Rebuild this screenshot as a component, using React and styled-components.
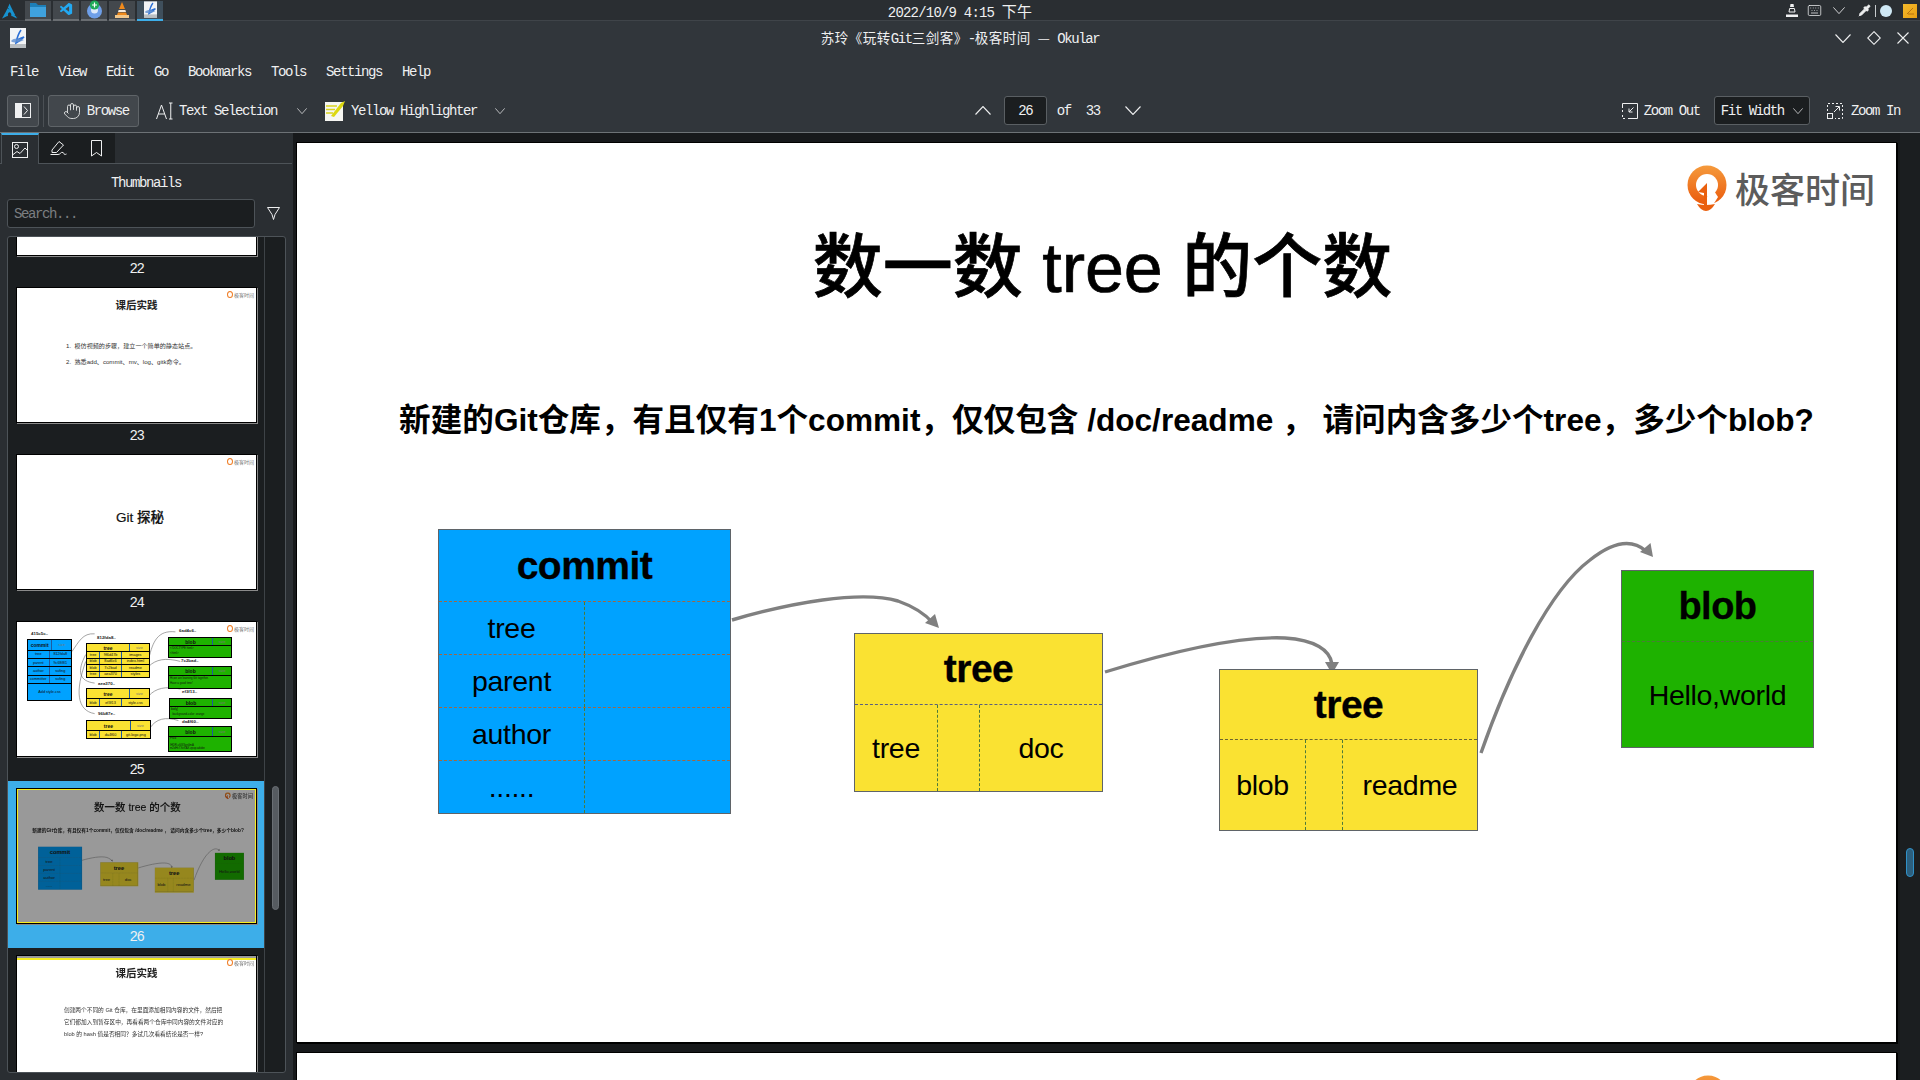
import styled, { createGlobalStyle, css } from "styled-components";
import { Hand, Keyboard, Pipette } from "lucide-react";
import { SiArchlinux } from "react-icons/si";
import { VscVscode } from "react-icons/vsc";

const GlobalStyle = createGlobalStyle`
  html, body { margin: 0; padding: 0; background: #17191b; }
  * { box-sizing: border-box; }
`;

const mono = css`
  font-family: "Liberation Mono", "Noto Sans CJK SC", monospace;
  font-size: 14px;
  letter-spacing: -1.4px;
  color: #eff0f1;
  white-space: pre;
`;

const Cjk = styled.span`
  font-family: "Noto Sans CJK SC", sans-serif;
  font-size: 13.5px;
  letter-spacing: 0.5px;
`;

const Desktop = styled.div`
  width: 1920px;
  height: 1080px;
  overflow: hidden;
  display: flex;
  flex-direction: column;
  background: #31363b;
`;

/* top panel */
const Panel = styled.div`
  height: 21px;
  flex: none;
  display: grid;
  grid-template-columns: 1fr auto 1fr;
  align-items: center;
  background: #2a2e32;
  border-bottom: 1px solid #3f4449;
`;
const TaskList = styled.div`
  display: flex;
  align-items: center;
  gap: 2px;
  padding-left: 2px;
  height: 20px;
`;
const ArchSlot = styled.div`
  width: 16px;
  height: 16px;
  margin-right: 5px;
  color: #1793d1;
  font-size: 16px;
  display: flex;
`;
const TaskItem = styled.div`
  width: 26px;
  height: 20px;
  display: flex;
  align-items: center;
  justify-content: center;
  background: ${(p) => (p.$active ? "#3f4f5c" : "#43484d")};
  border-bottom: 2px solid ${(p) => (p.$active ? "#3daee9" : "#6a6e72")};
  color: #23a9f2;
  font-size: 15px;
`;
const Clock = styled.div`
  ${mono}
  letter-spacing: -0.8px;
  & > span {
    font-size: 15px;
    letter-spacing: 0.2px;
  }
`;
const Tray = styled.div`
  justify-self: end;
  display: flex;
  align-items: center;
  height: 20px;
  padding-right: 3px;
  color: #eff0f1;
`;
const TraySlot = styled.div`
  display: flex;
  align-items: center;
  margin-left: ${(p) => p.$gap || 0}px;
`;
const TrayBar = styled.div`
  width: 1px;
  height: 12px;
  background: #c8cbce;
  margin-left: 4px;
`;
const TrayDot = styled.div`
  width: 12px;
  height: 12px;
  border-radius: 50%;
  background: #cfe8f5;
  margin-left: 4px;
`;
const TrayNote = styled.div`
  width: 14px;
  height: 14px;
  background: linear-gradient(135deg, #f4b92b, #e9a013);
  margin-left: 11px;
  display: flex;
  align-items: center;
  justify-content: center;
`;

/* window chrome */
const TitleRow = styled.div`
  height: 34px;
  flex: none;
  display: grid;
  grid-template-columns: 1fr auto 1fr;
  align-items: center;
  padding: 0 10px;
`;
const WindowTitle = styled.div`
  ${mono}
  margin-top: -2px;
`;
const WindowButtons = styled.div`
  justify-self: end;
  display: flex;
  align-items: center;
  gap: 16px;
  padding-right: 1px;
`;
const MenuBar = styled.div`
  height: 34px;
  flex: none;
  display: flex;
  align-items: center;
  padding-left: 10px;
`;
const MenuItem = styled.span`
  ${mono}
  width: ${(p) => p.$w}px;
`;
const Toolbar = styled.div`
  height: 44px;
  flex: none;
  display: flex;
  align-items: center;
  padding: 0 20px 0 7px;
  border-bottom: 1px solid #6d7276;
`;
const SquareButton = styled.div`
  width: 32px;
  height: 32px;
  display: flex;
  align-items: center;
  justify-content: center;
  background: #42474c;
  border: 1px solid #5f6468;
  border-radius: 3px;
`;
const ToolSep = styled.div`
  width: 1px;
  height: 32px;
  background: #4b5055;
  margin: 0 4px;
`;
const BrowseButton = styled.div`
  ${mono}
  width: 92px;
  height: 32px;
  display: flex;
  align-items: center;
  gap: 6px;
  padding-left: 14px;
  background: #42474c;
  border: 1px solid #5f6468;
  border-radius: 3px;
`;
const ToolItem = styled.div`
  ${mono}
  display: flex;
  align-items: center;
  gap: ${(p) => p.$gap ?? 6}px;
  margin-left: ${(p) => p.$left || 0}px;
`;
const PageInput = styled.div`
  ${mono}
  width: 43px;
  height: 29px;
  display: flex;
  align-items: center;
  justify-content: center;
  background: #1b1e20;
  border: 1px solid #5a5f63;
  border-radius: 3px;
  margin-left: 13px;
`;
const PageText = styled.span`
  ${mono}
  margin-left: ${(p) => p.$left}px;
`;
const Combo = styled.div`
  ${mono}
  width: 97px;
  height: 29px;
  display: flex;
  align-items: center;
  justify-content: space-between;
  padding: 0 6px 0 6px;
  background: #1b1e20;
  border: 1px solid #5a5f63;
  border-radius: 3px;
  margin-left: 14px;
`;

/* main area */
const Main = styled.div`
  flex: 1;
  min-height: 0;
  display: flex;
`;
const Sidebar = styled.div`
  width: 293px;
  flex: none;
  display: flex;
  flex-direction: column;
  background: #2a2e32;
  padding-right: 1px;
`;
const Tabs = styled.div`
  height: 31px;
  flex: none;
  display: flex;
  padding-left: 1px;
  border-bottom: 1px solid #4d5358;
`;
const Tab = styled.div`
  width: 38px;
  height: ${(p) => (p.$active ? 31 : 30)}px;
  display: flex;
  align-items: center;
  justify-content: center;
  background: ${(p) => (p.$active ? "#2a2e32" : "#1b1e20")};
  ${(p) =>
    p.$active &&
    css`
      border-top: 2px solid #3daee9;
      border-left: 1px solid #4d5358;
      border-right: 1px solid #4d5358;
    `}
`;
const SideTitle = styled.div`
  ${mono}
  height: 35px;
  flex: none;
  padding-top: 2px;
  display: flex;
  align-items: center;
  justify-content: center;
`;
const SearchRow = styled.div`
  flex: none;
  display: flex;
  align-items: center;
  gap: 12px;
  padding-left: 7px;
  margin-bottom: 8px;
`;
const SearchBox = styled.div`
  ${mono}
  color: #7b7f82;
  width: 248px;
  height: 29px;
  display: flex;
  align-items: center;
  padding-left: 6px;
  background: #1b1e20;
  border: 1px solid #4d5358;
  border-radius: 3px;
`;
const ThumbList = styled.div`
  width: 279px;
  height: 837px;
  margin-left: 7px;
  display: flex;
  overflow: hidden;
  background: #1b1e20;
  border: 1px solid #4d5358;
  border-radius: 3px;
`;
const ThumbColumn = styled.div`
  width: 256px;
  flex: none;
  margin-top: -124px;
`;
const ThumbTrack = styled.div`
  flex: 1;
  border-left: 1px solid #3e4347;
  padding: 549px 0 0 7px;
`;
const ThumbHandle = styled.div`
  width: 7px;
  height: 124px;
  border-radius: 4px;
  background: #565b60;
  border: 1px solid #6a6f74;
`;
const ThumbItem = styled.div`
  height: 167px;
  padding: 7px 0 0 8px;
  background: ${(p) => (p.$selected ? "#3daee9" : "transparent")};
`;
const ThumbPage = styled.div`
  position: relative;
  width: 241px;
  height: 136px;
  background: #fff;
  border: 1px solid #000;
  box-shadow: 1px 1px 0 #8a8a8a;
  overflow: hidden;
  display: flex;
  flex-direction: column;
  font-family: "Liberation Sans", "Noto Sans CJK SC", sans-serif;
  color: #222;
`;
const ThumbLabel = styled.div`
  ${mono}
  width: 241px;
  height: 24px;
  padding-top: 2px;
  display: flex;
  align-items: center;
  justify-content: center;
`;
const MiniLogoWrap = styled.div`
  position: absolute;
  top: 3px;
  right: 2px;
  display: flex;
  align-items: center;
  gap: 1px;
  font-family: "Noto Sans CJK SC", sans-serif;
  font-size: 5px;
  line-height: 7px;
  color: #777;
`;
const MiniLogoDot = styled.div`
  width: 6px;
  height: 7px;
  border-radius: 50%;
  border: 1.5px solid #ef7d25;
`;
const ThumbHeading = styled.div`
  margin-top: 10px;
  height: 14px;
  line-height: 14px;
  text-align: center;
  font-size: 10.5px;
  font-weight: 700;
  color: #222;
`;
const ThumbLines = styled.div`
  margin: ${(p) => p.$top}px 0 0 ${(p) => p.$left}px;
  font-size: ${(p) => p.$size}px;
  line-height: ${(p) => p.$line}px;
  white-space: pre;
  color: #333;
`;
const ThumbCenter = styled.div`
  flex: 1;
  display: flex;
  align-items: center;
  justify-content: center;
  padding: 0 0 12px 7px;
  font-size: 13.5px;
  font-weight: 500;
  color: #111;
  -webkit-text-stroke: 0.2px #111;
`;
const SelectStrip = styled.div`
  position: absolute;
  top: 0;
  left: 0;
  right: 0;
  height: 4px;
  background: #999;
  border-bottom: 2px solid #f8ee1e;
`;
const ScaledSlide = styled.div`
  position: absolute;
  top: 0;
  left: 0;
  width: 1599px;
  height: 899px;
  transform: scale(0.1495);
  transform-origin: 0 0;
`;
const SelectShade = styled.div`
  position: absolute;
  inset: 0;
  background: rgba(0, 0, 0, 0.4);
  border: 1.5px solid #f8ee1e;
`;

/* mini git diagram in thumb 25 */
const MiniNode = styled.div`
  position: absolute;
  left: ${(p) => p.$x}px;
  top: ${(p) => p.$y}px;
  width: ${(p) => p.$w}px;
  height: ${(p) => p.$h}px;
  background: ${(p) => p.$color};
  border: 1px solid #000;
  display: flex;
  flex-direction: column;
  font-size: 3.8px;
  color: #111;
`;
const MiniRow = styled.div`
  flex: ${(p) => p.$flex || 1};
  display: flex;
  min-height: 0;
  border-top: ${(p) => (p.$first ? "0" : "1px solid #000")};
`;
const MiniCell = styled.div`
  flex: ${(p) => p.$flex} 0 0;
  display: flex;
  align-items: center;
  justify-content: center;
  white-space: nowrap;
  overflow: hidden;
  font-weight: ${(p) => (p.$head ? 700 : 400)};
  font-size: ${(p) => (p.$head ? 5 : 3.8)}px;
  color: ${(p) => (p.$faint ? "#777" : "#111")};
  & + & {
    border-left: 1px solid ${(p) => (p.$faint ? "#1e5aa0" : "#000")};
  }
`;
const MiniText = styled.div`
  flex: 3;
  border-top: 1px solid #000;
  padding-left: 1px;
  font-size: 2.8px;
  line-height: ${(p) => p.$line || 5}px;
  white-space: pre;
  overflow: hidden;
`;
const MiniName = styled.div`
  position: absolute;
  left: ${(p) => p.$x}px;
  top: ${(p) => p.$y}px;
  font-size: 4.4px;
  line-height: 6px;
  font-weight: 700;
  color: #222;
`;
const MiniCurves = styled.svg`
  position: absolute;
  inset: 0;
  width: 100%;
  height: 100%;
`;

/* document view */
const Viewport = styled.div`
  flex: 1;
  min-width: 0;
  display: flex;
  flex-direction: column;
  gap: 11px;
  padding: 10px 0 0 4px;
  overflow: hidden;
  background: #17191b;
`;
const Page = styled.div`
  position: relative;
  flex: none;
  width: 1599px;
  height: 899px;
  background: #fff;
  box-shadow: 0 0 0 1px #000, 1px 1px 0 1px #000;
  font-family: "Liberation Sans", "Noto Sans CJK SC", sans-serif;
  color: #000;
`;
const DocScroll = styled.div`
  width: 20px;
  flex: none;
  background: #1b1e20;
  padding: 715px 0 0 6px;
`;
const DocHandle = styled.div`
  width: 8px;
  height: 29px;
  border-radius: 4px;
  background: #2c5f7e;
  border: 1px solid #3091c8;
`;
const BrandWrap = styled.div`
  position: absolute;
  top: 22px;
  right: 21px;
  display: flex;
  align-items: center;
  gap: 8px;
`;
const BrandIconOnly = styled.div`
  position: absolute;
  top: 22px;
  left: 1391px;
`;
const BrandText = styled.span`
  font-family: "Noto Sans CJK SC", sans-serif;
  font-size: 35px;
  font-weight: 500;
  line-height: 46px;
  color: #5c5c5c;
`;
const SlideTitle = styled.h1`
  margin: 0;
  padding: 82px 0 0 12px;
  height: 168px;
  text-align: center;
  font-size: 70px;
  line-height: 86px;
  font-weight: 500;
  white-space: pre;
  -webkit-text-stroke: 0.7px #000;
`;
const SlideQuestion = styled.p`
  margin: 0;
  padding: 85px 0 0 20px;
  text-align: center;
  font-size: 31.6px;
  line-height: 48px;
  font-weight: 700;
  white-space: pre;
`;
const DiagramLayer = styled.svg`
  position: absolute;
  inset: 0;
  width: 100%;
  height: 100%;
`;
const Node = styled.div`
  position: absolute;
  left: ${(p) => p.$x}px;
  top: ${(p) => p.$y}px;
  width: ${(p) => p.$w}px;
  height: ${(p) => p.$h}px;
  background: ${(p) => p.$color};
  border: 1px solid #5f6468;
  display: flex;
  flex-direction: column;
`;
const NodeHead = styled.div`
  height: ${(p) => p.$h}px;
  flex: none;
  display: flex;
  align-items: center;
  justify-content: center;
  font-size: ${(p) => p.$size}px;
  font-weight: 700;
  letter-spacing: -0.5px;
  -webkit-text-stroke: 0.3px #000;
`;
const NodeRow = styled.div`
  flex: ${(p) => p.$flex || 1} 0 0;
  display: grid;
  grid-template-columns: ${(p) => p.$cols};
  border-top: 1px dashed ${(p) => p.$line};
`;
const NodeCell = styled.div`
  display: flex;
  align-items: center;
  justify-content: center;
  padding-top: 1px;
  font-size: 28.5px;
  letter-spacing: -0.3px;
  & + & {
    border-left: 1px dashed ${(p) => p.$line};
  }
`;

const Chevron = ({ dir = "down", w = 16, h = 9, color = "#eff0f1" }) => (
  <svg width={w} height={h} viewBox="0 0 16 9" preserveAspectRatio="none" fill="none">
    <polyline
      points={dir === "down" ? "0.5,0.5 8,8.5 15.5,0.5" : "0.5,8.5 8,0.5 15.5,8.5"}
      stroke={color}
      strokeWidth="1.1"
    />
  </svg>
);

const OkularIcon = ({ w = 16, h = 20 }) => (
  <svg width={w} height={h} viewBox="0 0 16 20">
    <rect width="16" height="20" fill="#f2f4f6" />
    <rect y="16" width="16" height="4" fill="#b9bec2" />
    <path d="M11 2C8 6 7 10 6 15C8 14 11 12 14 9C11 10 9 11 7 12" fill="none" stroke="#2a6fd6" strokeWidth="1.6" />
    <path d="M1 13C4 10 8 10 14 12C10 14 5 15 2 14Z" fill="#5f8fd0" opacity="0.8" />
  </svg>
);

const FolderIcon = () => (
  <svg width="16" height="16" viewBox="0 0 16 16">
    <path d="M0 1H6L8 3H16V15H0Z" fill="#1d7fb8" />
    <rect y="5" width="16" height="10" fill="#3fa2de" />
  </svg>
);

const ChatIcon = () => (
  <svg width="15" height="19" viewBox="0 0 15 19">
    <circle cx="7.5" cy="11" r="7.5" fill="#6e9fe8" />
    <circle cx="7.5" cy="10" r="3.5" fill="#dce9fa" />
    <circle cx="7.5" cy="5" r="4.6" fill="#1faa59" />
    <path d="M7.5 2.5V7.5M5 5H10" stroke="#fff" strokeWidth="1.2" />
  </svg>
);

const ConeIcon = () => (
  <svg width="14" height="16" viewBox="0 0 14 16">
    <path d="M7 0L10 7H4Z" fill="#f08a1c" />
    <path d="M3.6 8H10.4L11 10H3Z" fill="#f3e9dc" />
    <path d="M3 10.5H11L12 13H2Z" fill="#f08a1c" />
    <rect y="13" width="14" height="3" fill="#f3c88a" />
  </svg>
);

const TrayCone = () => (
  <svg width="12" height="13" viewBox="0 0 12 13" fill="#eff0f1">
    <path d="M4.5 0H7.5L8 3H4Z" />
    <path d="M3.6 4.5H8.4L9 8H3Z" fill="none" stroke="#eff0f1" />
    <rect y="10.5" width="12" height="2.5" />
  </svg>
);

const NotePen = () => (
  <svg width="9" height="9" viewBox="0 0 9 9" fill="none" stroke="#b9740f">
    <path d="M1 8L7 2M2 8H8" />
  </svg>
);

const SidebarToggleIcon = () => (
  <svg width="16" height="15" viewBox="0 0 16 15" fill="none">
    <rect x="0.5" y="0.5" width="15" height="14" stroke="#eff0f1" />
    <rect width="7" height="15" fill="#eff0f1" />
    <polyline points="9,3.5 12.5,7.5 9,11.5" stroke="#eff0f1" />
  </svg>
);

const TextSelectIcon = () => (
  <svg width="17" height="18" viewBox="0 0 17 18" fill="none" stroke="#eff0f1" strokeWidth="1">
    <path d="M0.5 17L5.5 3L10.5 17M2.3 12H8.7" />
    <path d="M13 1H16.5M14.75 1V17M13 17H16.5" />
  </svg>
);

const HighlighterIcon = () => (
  <svg width="20" height="21" viewBox="0 0 20 21">
    <rect y="2" width="18" height="19" fill="#f6f6f2" />
    <path d="M1 6H12M1 9.5H10M1 13H8" stroke="#d9d31e" strokeWidth="1.6" />
    <path d="M6 16L16 3L20 1L18 6L9 17Z" fill="#dcd80f" />
  </svg>
);

const ZoomOutIcon = () => (
  <svg width="16" height="16" viewBox="0 0 16 16" fill="none" stroke="#eff0f1">
    <path d="M0.5 5V0.5H15.5V15.5H6" />
    <path d="M0.5 7V10M0.5 12V15.5H4" strokeDasharray="2 2" />
    <path d="M11.5 4.5L7 9M7 5.5V9H10.5" />
  </svg>
);

const ZoomInIcon = () => (
  <svg width="16" height="16" viewBox="0 0 16 16" fill="none" stroke="#eff0f1">
    <path d="M0.5 8V0.5H15.5V15.5H8" strokeDasharray="2 2" />
    <rect x="0.5" y="10.5" width="5" height="5" />
    <path d="M7 9L12 4M8.5 3.5H12.5V7.5" />
  </svg>
);

const ImageTabIcon = () => (
  <svg width="16" height="16" viewBox="0 0 16 16" fill="none" stroke="#eff0f1">
    <rect x="0.5" y="0.5" width="15" height="15" />
    <circle cx="4.5" cy="4.5" r="2" />
    <polyline points="0.5,13 5,9.5 8,11.5 13,6 15.5,8.5" />
  </svg>
);

const PenTabIcon = () => (
  <svg width="17" height="16" viewBox="0 0 17 16" fill="none" stroke="#eff0f1">
    <path d="M2 10L9 1.5L13.5 5L6.5 12.5H2Z" />
    <path d="M0.5 14.5H8C11 14.5 10.5 11.5 13 12.5C15 13.5 13 15.5 16.5 14" />
  </svg>
);

const BookmarkTabIcon = () => (
  <svg width="11" height="17" viewBox="0 0 11 17" fill="none" stroke="#eff0f1">
    <path d="M0.5 0.5H10.5V16L5.5 12.5L0.5 16Z" />
  </svg>
);

const FilterIcon = () => (
  <svg width="13" height="13" viewBox="0 0 13 13" fill="none" stroke="#eff0f1">
    <path d="M0.5 0.5H12.5L8 7.5L6.5 12.5L5 7.5Z" />
  </svg>
);

const DiamondIcon = () => (
  <svg width="14" height="14" viewBox="0 0 14 14" fill="none" stroke="#eff0f1" strokeWidth="1.1">
    <path d="M7 0.7L13.3 7L7 13.3L0.7 7Z" />
  </svg>
);

const CloseIcon = () => (
  <svg width="12" height="12" viewBox="0 0 12 12" stroke="#eff0f1" strokeWidth="1.1">
    <path d="M0.5 0.5L11.5 11.5M11.5 0.5L0.5 11.5" />
  </svg>
);

const BrandIcon = () => (
  <svg width="40" height="46" viewBox="0 0 40 46">
    <defs>
      <linearGradient id="brandFill" x1="0" y1="0" x2="0" y2="1">
        <stop offset="0" stopColor="#f59a3c" />
        <stop offset="1" stopColor="#ea5a0c" />
      </linearGradient>
    </defs>
    <circle cx="20" cy="20" r="19.5" fill="url(#brandFill)" />
    <circle cx="20" cy="20" r="11" fill="#fff" />
    <polygon points="22,18 31,32 26,40 19,40" fill="#fff" />
    <polygon points="20,18 11,27 17,28 17,40 20,40" fill="#ea600f" />
    <path d="M10 39Q19 41 28 39Q24 46 19 46Q14 46 10 39Z" fill="#ea600f" />
  </svg>
);

const Brand = () => (
  <BrandWrap>
    <BrandIcon />
    <BrandText>极客时间</BrandText>
  </BrandWrap>
);

const ARROWS = [
  {
    line: "M732 620C790 603 860 590 898 601C915 607 926 615 933 623",
    head: "939,628 925,623 935,614",
  },
  {
    line: "M1105 672C1170 652 1240 636 1285 638C1315 640 1330 650 1332 664",
    head: "1332,674 1325,662 1339,662",
  },
  {
    line: "M1481 753C1510 670 1550 590 1590 560C1610 544 1630 537 1646 551",
    head: "1653,557 1640,552 1650.5,543",
  },
];

const Slide = () => (
  <>
    <Brand />
    <SlideTitle>数一数 tree 的个数</SlideTitle>
    <SlideQuestion>新建的Git仓库，有且仅有1个commit，仅仅包含 /doc/readme ， 请问内含多少个tree，多少个blob?</SlideQuestion>
    <DiagramLayer viewBox="297 143 1599 899">
      {ARROWS.map((a) => (
        <g key={a.head}>
          <path d={a.line} fill="none" stroke="#808080" strokeWidth="3.4" />
          <polygon points={a.head} fill="#808080" />
        </g>
      ))}
    </DiagramLayer>
    <Node $x={141} $y={386} $w={293} $h={285} $color="#00a2ff">
      <NodeHead $h={71} $size={39}>commit</NodeHead>
      {["tree", "parent", "author", "......"].map((t) => (
        <NodeRow key={t} $cols="145px 1fr" $line="#a5683f">
          <NodeCell $line="#a5683f">{t}</NodeCell>
          <NodeCell $line="#a5683f" />
        </NodeRow>
      ))}
    </Node>
    <Node $x={557} $y={490} $w={249} $h={159} $color="#fae232">
      <NodeHead $h={70} $size={39}>tree</NodeHead>
      <NodeRow $cols="82px 42px 1fr" $line="#5a5f7f">
        <NodeCell $line="#c4a93a">tree</NodeCell>
        <NodeCell $line="#c4a93a" />
        <NodeCell $line="#c4a93a">doc</NodeCell>
      </NodeRow>
    </Node>
    <Node $x={922} $y={526} $w={259} $h={162} $color="#fae232">
      <NodeHead $h={69} $size={39}>tree</NodeHead>
      <NodeRow $cols="85px 37px 1fr" $line="#6b6530">
        <NodeCell $line="#a8923a">blob</NodeCell>
        <NodeCell $line="#a8923a" />
        <NodeCell $line="#a8923a">readme</NodeCell>
      </NodeRow>
    </Node>
    <Node $x={1324} $y={427} $w={193} $h={178} $color="#1eb200">
      <NodeHead $h={70} $size={38}>blob</NodeHead>
      <NodeRow $cols="1fr" $line="#4d7a3a">
        <NodeCell $line="#4d7a3a">Hello,world</NodeCell>
      </NodeRow>
    </Node>
  </>
);

const MiniLogo = () => (
  <MiniLogoWrap>
    <MiniLogoDot />
    极客时间
  </MiniLogoWrap>
);

const MINI_TABLES = [
  { x: 10, y: 17, w: 45, h: 62, color: "#00a2ff", head: ["commit", "size"], headCols: [25, 20], cols: [22, 23], headFlex: 1.3,
    rows: [["tree", "812fda8"], ["parent", "9c68f81"], ["author", "sufing"], ["committer", "sufing"]], last: "Add style.css" },
  { x: 69, y: 21, w: 64, h: 35, color: "#fae232", head: ["tree", "size"], headCols: [44, 20], cols: [13, 22, 29], headFlex: 1.3,
    rows: [["tree", "9f6d47b", "images"], ["blob", "8ad6c6", "index.html"], ["blob", "7c2bad", "readme"], ["tree", "aea370", "styles"]] },
  { x: 69, y: 66, w: 64, h: 19, color: "#fae232", head: ["tree", "size"], headCols: [44, 20], cols: [13, 22, 29], headFlex: 1.3,
    rows: [["blob", "ef3f13", "style.css"]] },
  { x: 69, y: 98, w: 65, h: 19, color: "#fae232", head: ["tree", "size"], headCols: [45, 20], cols: [13, 22, 30], headFlex: 1.3,
    rows: [["blob", "da4f60", "git-logo.png"]] },
  { x: 151, y: 15, w: 64, h: 21, color: "#1eb200", head: ["blob", "size"], headCols: [45, 19], text: "<!DOCTYPE html>\n<html>" },
  { x: 151, y: 44, w: 64, h: 23, color: "#1eb200", head: ["blob", "size"], headCols: [45, 19], text: "Hi,we are learning Git together.\nHave a good time!" },
  { x: 152, y: 76, w: 63, h: 21, color: "#1eb200", head: ["blob", "size"], headCols: [44, 19], text: "body{\n  background-color: orange" },
  { x: 151, y: 104, w: 64, h: 26, color: "#1eb200", head: ["blob", "size"], headCols: [45, 19], textLine: 3.4, text: "PNG\n\nIHDR.u6iSSyn4mA\nm2dHc7XeXAX.zpop.adobe" },
];

const MINI_NAMES = [
  [14, 9, "415c5c.."], [80, 13, "812fda8.."], [81, 59, "aea370.."], [81, 89, "96b87e.."],
  [162, 6, "6ad4c6.."], [164, 36, "7c2bad.."], [165, 67, "ef3f13.."], [165, 97, "da4f60.."],
];

const MiniTable = ({ t }) => (
  <MiniNode $x={t.x} $y={t.y} $w={t.w} $h={t.h} $color={t.color}>
    <MiniRow $first $flex={t.headFlex || (t.text ? 2 : 1)}>
      <MiniCell $flex={t.headCols[0]} $head>{t.head[0]}</MiniCell>
      <MiniCell $flex={t.headCols[1]} $faint>{t.head[1]}</MiniCell>
    </MiniRow>
    {t.rows &&
      t.rows.map((r) => (
        <MiniRow key={r[0] + r[1]}>
          {r.map((c, i) => (
            <MiniCell key={c} $flex={t.cols[i]}>{c}</MiniCell>
          ))}
        </MiniRow>
      ))}
    {t.last && (
      <MiniRow $flex={2.2}>
        <MiniCell $flex={1}>{t.last}</MiniCell>
      </MiniRow>
    )}
    {t.text && <MiniText $line={t.textLine}>{t.text}</MiniText>}
  </MiniNode>
);

const GitThumb = () => (
  <>
    <MiniLogo />
    <MiniCurves viewBox="0 0 241 136">
      {["M55 30C62 20 66 11 78 12", "M69 33C60 50 62 60 78 62", "M69 40C58 70 60 90 78 93", "M133 37C137 20 142 8 160 10",
        "M133 45C140 38 150 36 165 40", "M133 75C140 67 150 65 165 68", "M134 108C140 98 150 96 163 100"].map((d) => (
        <path key={d} d={d} fill="none" stroke="#666" strokeWidth="0.6" />
      ))}
    </MiniCurves>
    {MINI_NAMES.map(([x, y, n]) => (
      <MiniName key={n} $x={x} $y={y}>{n}</MiniName>
    ))}
    {MINI_TABLES.map((t) => (
      <MiniTable key={`${t.x}-${t.y}`} t={t} />
    ))}
  </>
);

const Thumb = ({ n, selected, children }) => (
  <ThumbItem $selected={selected}>
    <ThumbPage>{children}</ThumbPage>
    {n && <ThumbLabel>{n}</ThumbLabel>}
  </ThumbItem>
);

const MENU = [["File", 48], ["View", 48], ["Edit", 48], ["Go", 34], ["Bookmarks", 83], ["Tools", 55], ["Settings", 76], ["Help", 40]];

export default function App() {
  return (
    <Desktop>
      <GlobalStyle />
      <Panel>
        <TaskList>
          <ArchSlot><SiArchlinux /></ArchSlot>
          <TaskItem><FolderIcon /></TaskItem>
          <TaskItem><VscVscode /></TaskItem>
          <TaskItem><ChatIcon /></TaskItem>
          <TaskItem><ConeIcon /></TaskItem>
          <TaskItem $active><OkularIcon w={13} h={17} /></TaskItem>
        </TaskList>
        <Clock>2022/10/9 4:15 <Cjk>下午</Cjk></Clock>
        <Tray>
          <TraySlot><TrayCone /></TraySlot>
          <TraySlot $gap={9}><Keyboard size={15} strokeWidth={1.2} /></TraySlot>
          <TraySlot $gap={11}><Chevron w={12} h={7} /></TraySlot>
          <TraySlot $gap={13}><Pipette size={13} strokeWidth={1.6} fill="#eff0f1" /></TraySlot>
          <TrayBar />
          <TrayDot />
          <TrayNote><NotePen /></TrayNote>
        </Tray>
      </Panel>
      <TitleRow>
        <OkularIcon />
        <WindowTitle>
          <Cjk>苏玲《玩转</Cjk>Git<Cjk>三剑客》</Cjk>-<Cjk>极客时间</Cjk> <Cjk>—</Cjk> Okular
        </WindowTitle>
        <WindowButtons>
          <Chevron />
          <DiamondIcon />
          <CloseIcon />
        </WindowButtons>
      </TitleRow>
      <MenuBar>
        {MENU.map(([label, w]) => (
          <MenuItem key={label} $w={w}>{label}</MenuItem>
        ))}
      </MenuBar>
      <Toolbar>
        <SquareButton><SidebarToggleIcon /></SquareButton>
        <ToolSep />
        <BrowseButton><Hand size={18} strokeWidth={1.1} />Browse</BrowseButton>
        <ToolItem $left={17}><TextSelectIcon />Text Selection</ToolItem>
        <ToolItem $left={20}><Chevron w={10} h={6} /></ToolItem>
        <ToolItem $left={18}><HighlighterIcon />Yellow Highlighter</ToolItem>
        <ToolItem $left={18}><Chevron w={10} h={6} /></ToolItem>
        <ToolItem $left={470}><Chevron dir="up" /></ToolItem>
        <PageInput>26</PageInput>
        <PageText $left={10}>of</PageText>
        <PageText $left={15}>33</PageText>
        <ToolItem $left={25}><Chevron /></ToolItem>
        <ToolItem $left={481}><ZoomOutIcon />Zoom Out</ToolItem>
        <Combo>Fit Width<Chevron w={10} h={6} /></Combo>
        <ToolItem $left={17} $gap={8}><ZoomInIcon />Zoom In</ToolItem>
      </Toolbar>
      <Main>
        <Sidebar>
          <Tabs>
            <Tab $active><ImageTabIcon /></Tab>
            <Tab><PenTabIcon /></Tab>
            <Tab><BookmarkTabIcon /></Tab>
          </Tabs>
          <SideTitle>Thumbnails</SideTitle>
          <SearchRow>
            <SearchBox>Search...</SearchBox>
            <FilterIcon />
          </SearchRow>
          <ThumbList>
            <ThumbColumn>
              <Thumb n={22} />
              <Thumb n={23}>
                <MiniLogo />
                <ThumbHeading>课后实践</ThumbHeading>
                <ThumbLines $top={26} $left={49} $line={16} $size={6.1}>
                  {"1.  模仿视频的步骤，建立一个简单的静态站点。\n2.  熟悉add、commit、mv、log、gitk命令。"}
                </ThumbLines>
              </Thumb>
              <Thumb n={24}>
                <MiniLogo />
                <ThumbCenter>Git 探秘</ThumbCenter>
              </Thumb>
              <Thumb n={25}><GitThumb /></Thumb>
              <Thumb n={26} selected>
                <ScaledSlide><Slide /></ScaledSlide>
                <SelectShade />
              </Thumb>
              <Thumb>
                <SelectStrip />
                <MiniLogo />
                <ThumbHeading>课后实践</ThumbHeading>
                <ThumbLines $top={24} $left={47} $line={12} $size={5.7}>
                  {"创建两个不同的 Git 仓库，在里面添加相同内容的文件，然后把\n它们都加入到暂存区中，再看看两个仓库中同内容的文件对应的\nblob 的 hash 值是否相同？多试几次看看结论是否一样?"}
                </ThumbLines>
              </Thumb>
            </ThumbColumn>
            <ThumbTrack><ThumbHandle /></ThumbTrack>
          </ThumbList>
        </Sidebar>
        <Viewport>
          <Page><Slide /></Page>
          <Page><BrandIconOnly><BrandIcon /></BrandIconOnly></Page>
        </Viewport>
        <DocScroll><DocHandle /></DocScroll>
      </Main>
    </Desktop>
  );
}
